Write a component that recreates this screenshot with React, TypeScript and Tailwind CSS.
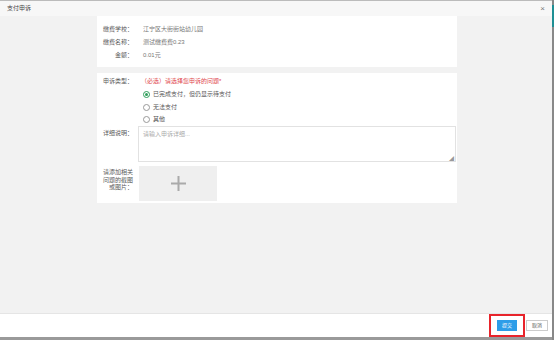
const font = { fontFamily: '"Liberation Sans", "Noto Sans CJK SC", sans-serif' };

const InfoRow = ({ label, value }: { label: string; value: string }) => (
  <div className="flex items-center h-[13px]">
    <div className="w-[36px] text-right text-[6px] text-[#5a5a5a]">{label}</div>
    <div className="ml-[10px] text-[6px] text-[#777]">{value}</div>
  </div>
);

const Radio = ({ text, checked }: { text: string; checked?: boolean }) => (
  <div className="flex items-center h-[12.5px] ml-[46px]">
    <div
      className={
        checked
          ? "w-[7px] h-[7px] rounded-full border border-[#2e9e5a] flex items-center justify-center"
          : "w-[7px] h-[7px] rounded-full border border-[#999]"
      }
    >
      {checked && <div className="w-[3px] h-[3px] rounded-full bg-[#2e9e5a]" />}
    </div>
    <div className="ml-[3px] text-[6px] text-[#555]">{text}</div>
  </div>
);

const App = () => {
  return (
    <div className="w-[554px] h-[340px] bg-[#f2f2f2] flex flex-col relative" style={font}>
      <div className="h-[16px] bg-[#f7f7f7] border-t border-[#bbb] flex items-center justify-between px-[7px] pr-[9px]">
        <span className="text-[6px] text-[#444]">支付申诉</span>
        <span className="text-[8px] text-[#777] leading-none">×</span>
      </div>

      <div className="flex-1 flex flex-col items-center">
        <div className="w-[360px] bg-white pt-[7px] pb-[5px]">
          <InfoRow label="缴费学校：" value="江宁区大街街站幼儿园" />
          <InfoRow label="缴费名称：" value="测试缴费费0.23" />
          <InfoRow label="金额：" value="0.01元" />
        </div>

        <div className="w-[360px] bg-white mt-[6px] pt-[2px] pb-[2px]">
          <div className="flex items-center h-[12px]">
            <div className="w-[36px] text-right text-[6px] text-[#5a5a5a]">申诉类型：</div>
            <div className="ml-[8px] text-[6px] text-[#e0454a]">（必选）请选择您申诉的问题*</div>
          </div>
          <div className="mt-[1.5px]">
            <Radio text="已完成支付，但仍显示待支付" checked />
            <Radio text="无法支付" />
            <Radio text="其他" />
          </div>

          <div className="flex">
            <div className="w-[36px] text-right text-[6px] text-[#5a5a5a] pt-[3px]">详细说明：</div>
            <div className="ml-[5px] w-[318px] h-[36px] border border-[#e2e2e2] relative">
              <span className="absolute left-[4px] top-[3px] text-[6px] text-[#aaa]">请输入申诉详细...</span>
              <span className="absolute right-[1px] bottom-[0px] text-[5px] text-[#999] leading-none">◢</span>
            </div>
          </div>

          <div className="flex mt-[4px]">
            <div className="w-[36px] text-right text-[6px] leading-[7.5px] text-[#5a5a5a] pt-[3px]">
              请添加相关
              <br />
              问题的截图
              <br />
              或图片：
            </div>
            <div className="ml-[6px] w-[78px] h-[35px] bg-[#efefef] flex items-center justify-center">
              <svg width="15" height="15" viewBox="0 0 15 15">
                <rect x="6.5" y="0" width="2" height="15" fill="#aaa" />
                <rect x="0" y="6.5" width="15" height="2" fill="#aaa" />
              </svg>
            </div>
          </div>
        </div>
      </div>

      <div className="h-[24px] bg-white border-t border-[#e5e5e5] flex items-center justify-end pr-[6px]">
        <div className="border-2 border-[#e8242b] px-[6px] py-[4px] mr-[1px]">
          <div className="w-[20px] h-[11px] bg-[#2d9de8] flex items-center justify-center text-[5px] text-white">提交</div>
        </div>
        <div className="w-[22px] h-[11px] border border-[#ccc] bg-white flex items-center justify-center text-[5px] text-[#555]">取消</div>
      </div>
      <div className="h-[3px] bg-[#9a9a9a]" />
      <div className="absolute right-0 top-0 w-[2px] h-[340px] bg-[#888]" />
      <div className="absolute right-0 top-[5px] w-[2px] h-[22px] bg-[#1e8f94]" />
    </div>
  );
};

export default App;
